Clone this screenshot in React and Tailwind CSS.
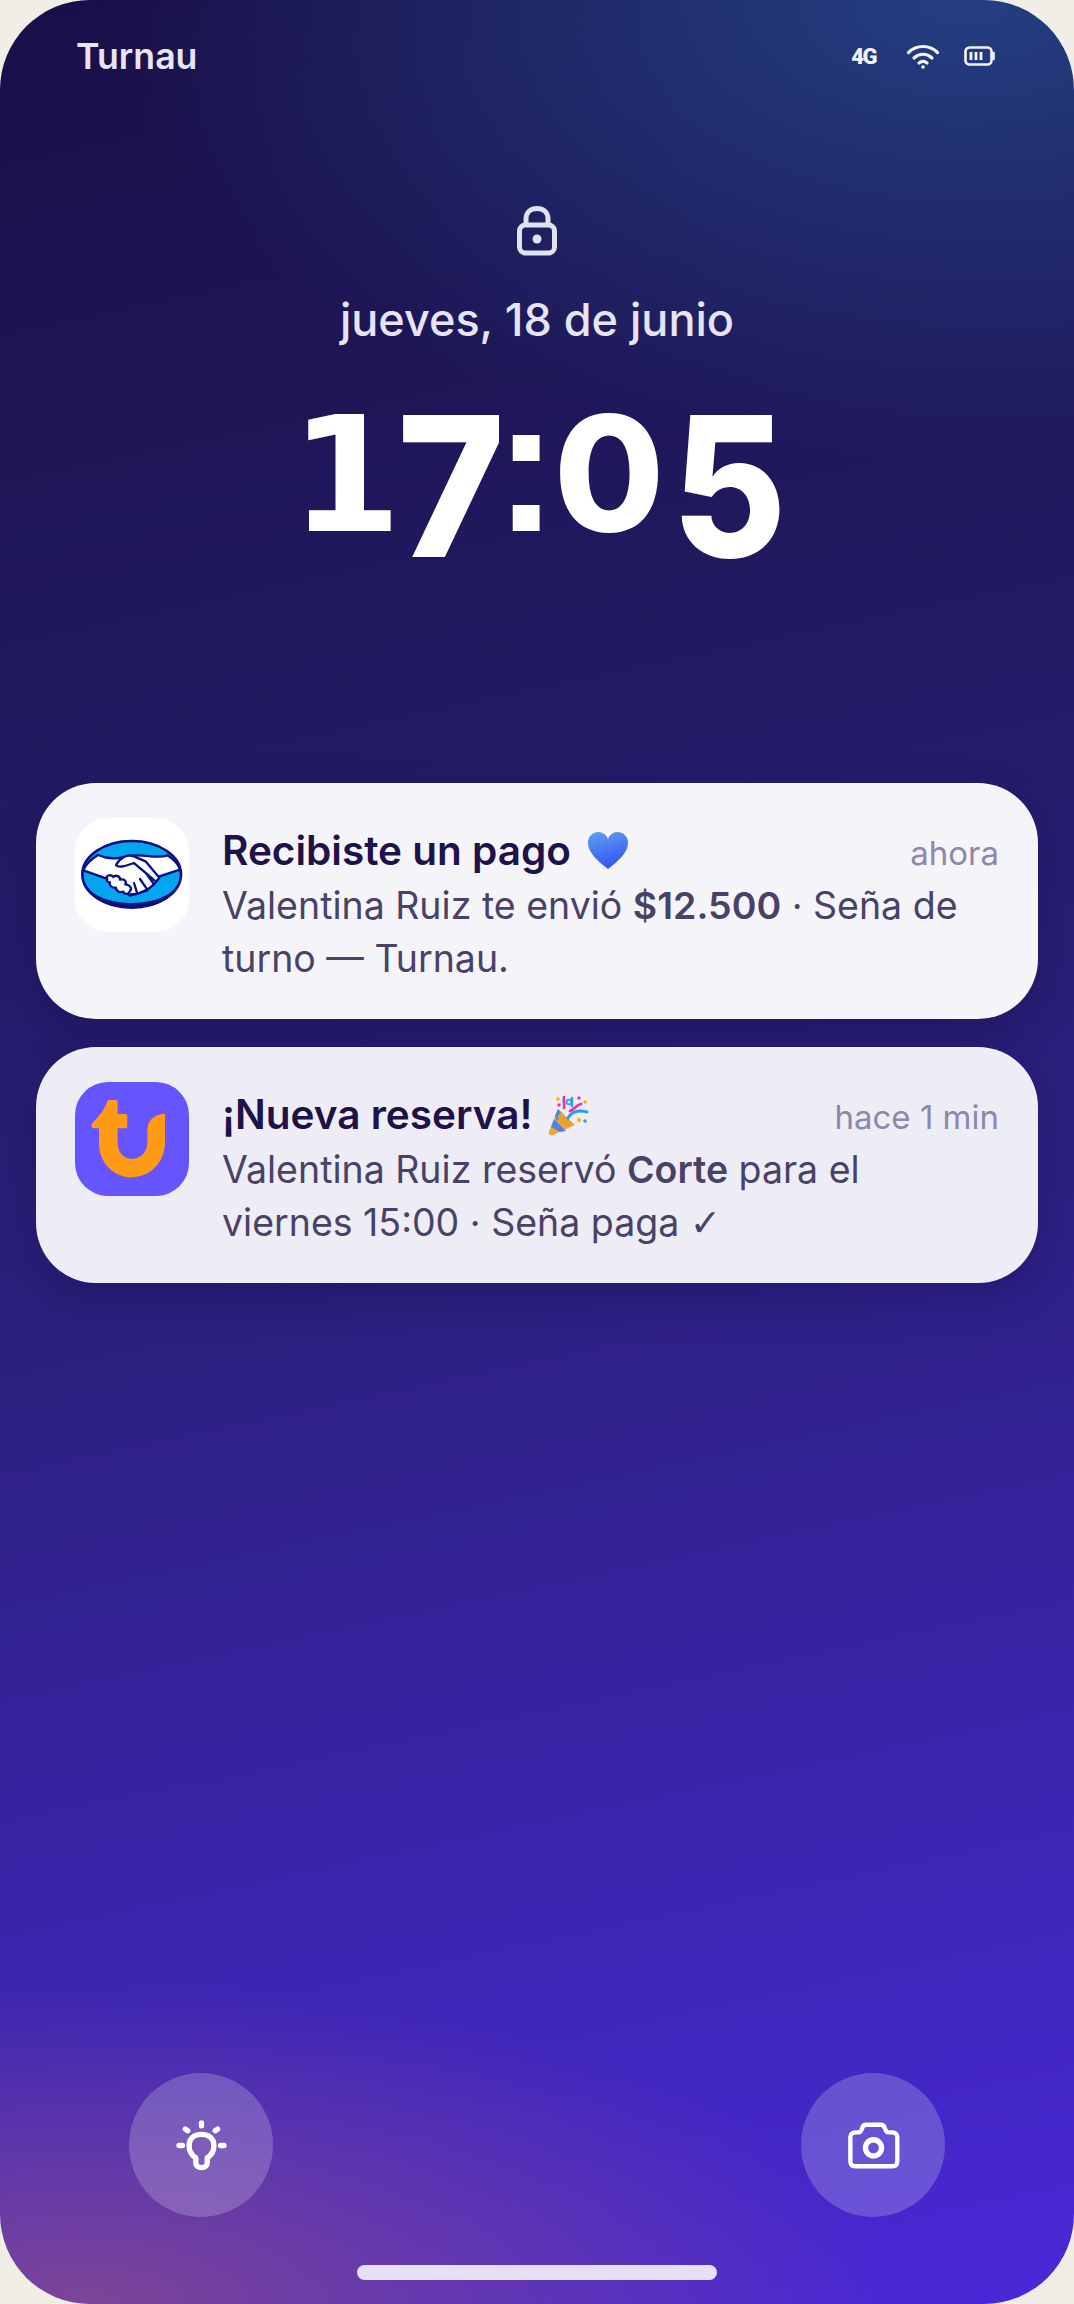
const NAVY = '#0a0f80'

function Wifi() {
  return (
    <svg width="34" height="26" viewBox="0 0 34 26" fill="none" stroke="#f2f2fa" strokeWidth="3.2" strokeLinecap="round">
      <path d="M2.5 9.5C10.5 1.5 23.5 1.5 31.5 9.5" />
      <path d="M8 15C13.5 10 20.5 10 26 15" />
      <path d="M13 20C15.5 18 18.5 18 21 20" />
      <circle cx="17" cy="24" r="1.8" fill="#f2f2fa" stroke="none" />
    </svg>
  )
}

function Battery() {
  return (
    <svg width="32" height="22" viewBox="0 0 32 22" fill="none">
      <rect x="1.5" y="2.5" width="26" height="17" rx="4" stroke="#f2f2fa" strokeWidth="2.6" />
      <path d="M29.5 8V14" stroke="#f2f2fa" strokeWidth="2.6" strokeLinecap="round" />
      <path d="M7 7V15M12 7V15M17 7V15" stroke="#f2f2fa" strokeWidth="2.8" />
    </svg>
  )
}

function Lock() {
  return (
    <svg width="42" height="50" viewBox="0 0 42 50" fill="none" stroke="#e2e1f0" strokeWidth="5">
      <rect x="3.5" y="19" width="35" height="28" rx="6" />
      <path d="M10 19V13C10 6 15 2.5 21 2.5C27 2.5 32 6 32 13V19" />
      <circle cx="21" cy="33" r="4.5" fill="#e2e1f0" stroke="none" />
    </svg>
  )
}

function MercadoIcon() {
  return (
    <svg className="w-[114px] h-[114px] rounded-[33px] bg-white shrink-0" viewBox="135 117 342 342">
      <ellipse cx="305" cy="286" rx="148" ry="100" fill="#03a5ee" stroke={NAVY} strokeWidth="8" />
      <path d="M305 388C385 388 452 345 455 292C446 340 385 372 305 372C225 372 164 340 155 292C158 345 225 388 305 388Z" fill={NAVY} />
      <path d="M160 274C168 254 184 240 204 228C235 242 262 240 298 231C340 222 380 242 412 229C430 240 444 254 450 272L388 292L350 335L300 350L228 298Z" fill="#fff" stroke={NAVY} strokeWidth="7" strokeLinejoin="round" />
      <path d="M258 258C268 238 290 224 312 232L348 248L388 296L372 316L352 332L320 345L300 346" fill="#fff" stroke={NAVY} strokeWidth="7" strokeLinejoin="round" />
      <path d="M258 258C264 268 285 262 312 252L378 308M350 285L372 316M330 300L352 332M312 312L322 344" fill="none" stroke={NAVY} strokeWidth="7" strokeLinecap="round" />
      <path d="M232 300C224 290 242 284 250 294C256 286 272 292 270 302C282 298 292 308 286 316C298 316 308 328 300 336C296 348 282 346 280 338C270 342 258 336 258 326C246 328 236 318 240 310C232 310 228 304 232 300Z" fill="#fff" stroke={NAVY} strokeWidth="7" strokeLinejoin="round" />
    </svg>
  )
}

function TurnauIcon() {
  return (
    <svg className="w-[114px] h-[114px] rounded-[33px] bg-[#6654ff] shrink-0" viewBox="135 129 342 342">
      <path d="M236 183H258Q263 183 263 188V225H286Q292 225 292 231V262Q292 268 286 268H263V310C263 340 280 360 305 360C332 360 352 340 352 310V275C352 245 370 226 405 224V310C405 370 360 415 305 415C250 415 207 370 207 315V268H192C185 268 182 258 187 252C205 235 222 215 232 187Z" fill="#ff9b12" />
    </svg>
  )
}

function Heart() {
  return (
    <svg width="42" height="38" viewBox="0 0 42 38">
      <defs>
        <linearGradient id="heartFill" x1="0.3" y1="0" x2="0.6" y2="1">
          <stop offset="0" stopColor="#5b9cf0" />
          <stop offset="1" stopColor="#3350f5" />
        </linearGradient>
      </defs>
      <path d="M21 37C12 30 1 21 1 11C1 4 6 0 11.500 0C16 0 19.500 3 21 7C22.500 3 26 0 30.500 0C36 0 41 4 41 11C41 21 30 30 21 37Z" fill="url(#heartFill)" />
    </svg>
  )
}

function Popper() {
  return (
    <svg width="42" height="42" viewBox="0 0 42 42">
      <path d="M1 38L10 15L27 31L5 41C2 42 0 40 1 38Z" fill="#f0a43a" />
      <path d="M6 25L18 37L12 38L3 33ZM10 15L15 20L9 27L7 22Z" fill="#4a86e8" />
      <path d="M13 18L25 30L20 33L9 23Z" fill="#e8a030" />
      <path d="M16 14C17 10 15 7 16 3" fill="none" stroke="#f02fa0" strokeWidth="2.6" strokeLinecap="round" />
      <path d="M20 24C24 17 31 16 39 18" fill="none" stroke="#2e9bf0" strokeWidth="3" strokeLinecap="round" />
      <path d="M22 17C27 15 28 11 33 10" fill="none" stroke="#f02fa0" strokeWidth="2.8" strokeLinecap="round" />
      <path d="M24 4V12" stroke="#2e9bf0" strokeWidth="2.4" strokeLinecap="round" />
      <circle cx="21" cy="8" r="2.4" fill="none" stroke="#2e9bf0" strokeWidth="1.6" />
      <circle cx="10" cy="5" r="1.7" fill="#f4b000" />
      <circle cx="11" cy="11" r="1.7" fill="#f02fa0" />
      <circle cx="31" cy="4" r="1.700" fill="#f02fa0" />
      <circle cx="37" cy="8" r="1.7" fill="#f4b000" />
      <circle cx="31" cy="26" r="2" fill="#f4b000" />
      <circle cx="37" cy="27" r="1.700" fill="#2e9bf0" />
    </svg>
  )
}

function Bulb() {
  return (
    <svg width="57" height="57" viewBox="188 200 170 170" fill="none" stroke="#fff" strokeWidth="16" strokeLinecap="round">
      <path d="M256 322C243 314 236 300 236 286C236 264 251 252 273 252C295 252 310 264 310 286C310 300 303 314 290 322V338C290 346 283 351 273 351C263 351 256 346 256 338Z" strokeLinejoin="round" />
      <path d="M273 218V226M225 236L232 241M321 236L314 241M206 285H216M330 285H340" strokeWidth="16" />
    </svg>
  )
}

function Camera() {
  return (
    <svg width="57" height="57" viewBox="195 200 170 170" fill="none" stroke="#fff" strokeWidth="13" strokeLinejoin="round">
      <path d="M226 246H236C242 246 244 240 246 234C248 226 252 223 258 223H302C308 223 312 226 314 234C316 240 318 246 324 246H336C346 246 351 252 351 260V332C351 342 346 347 336 347H226C216 347 211 342 211 332V260C211 252 216 246 226 246Z" />
      <circle cx="280" cy="292" r="24" strokeWidth="16" />
    </svg>
  )
}

function Notification({ icon, title, emoji, time, children }) {
  return (
    <div className="flex gap-[33px] rounded-[60px] px-[39px] pt-[35px] h-[236px] shadow-[0_16px_40px_rgba(15,10,60,0.28)] bg-[#f5f5f9] even:bg-[#eeedf6]">
      {icon}
      <div className="flex-1 min-w-0">
        <div className="flex items-center justify-between h-[60px] mt-[3px]">
          <div className="flex items-center gap-[16px] text-[40.500px] font-semibold text-[#1e1248] leading-none">
            <span>{title}</span>
            {emoji}
          </div>
          <span className="text-[33px] leading-[40px] mt-[3px] text-[#8d88aa]">{time}</span>
        </div>
        <p className="-mt-[2px] text-[37.500px] leading-[53px] text-[#4a4266]">{children}</p>
      </div>
    </div>
  )
}

export default function App() {
  return (
    <div className="bg-[#f1eee8] font-[Inter,sans-serif]">
      <div className="flex flex-col h-[2304px] rounded-[90px] overflow-hidden bg-[radial-gradient(ellipse_80%_20%_at_90%_0%,#243f82_0%,rgba(36,63,130,0)_100%),radial-gradient(ellipse_75%_14%_at_8%_100%,#7c4598_0%,rgba(124,69,152,0)_100%),linear-gradient(168deg,#190f48_0%,#211a60_30%,#2c2080_55%,#3a25ae_78%,#4a28d8_100%)]">
        <div className="flex items-center justify-between pl-[76px] pr-[78px] pt-[36px] h-[78px]">
          <span className="text-[35.700px] font-semibold text-[#e8e5f3]">Turnau</span>
          <div className="flex items-center -mt-[2px]">
            <span className="font-['Roboto',sans-serif] text-[22px] font-black text-[#f2f2fa] tracking-[-1.5px] mr-[30px]">4G</span>
            <span className="mr-[24px]"><Wifi /></span>
            <Battery />
          </div>
        </div>

        <div className="flex flex-col items-center mt-[128px]">
          <Lock />
          <p className="mt-[34px] text-[45px] leading-[60px] font-medium text-[#e6e4f2]">jueves, 18 de junio</p>
          <div className="flex h-[190px] mt-[20px] pr-[3px] items-baseline justify-center font-extrabold text-[160px] leading-[190px] text-white">
            <span className="font-['DejaVu_Sans',sans-serif] font-bold mr-[3px]">1</span>
            <span className="origin-[50%_37px] scale-x-[1.145] scale-y-[1.22]">7</span>
            <span className="font-['Liberation_Sans',sans-serif] font-bold text-[190px] -mx-[4px]">:</span>
            <span>0</span>
            <span className="origin-[50%_37px] ml-[12px] scale-x-[1.1] scale-y-[1.22]">5</span>
          </div>
        </div>

        <div className="flex flex-col gap-[28px] mx-[36px] mt-[223px]">
          <Notification icon={<MercadoIcon />} title="Recibiste un pago" emoji={<Heart />} time="ahora">
            Valentina Ruiz te envió <b className="font-semibold">$12.500</b> · Seña de turno — Turnau.
          </Notification>
          <Notification icon={<TurnauIcon />} title="¡Nueva reserva!" emoji={<Popper />} time="hace 1 min">
            Valentina Ruiz reservó <b className="font-semibold">Corte</b> para el viernes 15:00 · Seña paga <span className="font-['DejaVu_Sans',sans-serif]">✓</span>
          </Notification>
        </div>

        <div className="flex-1" />

        <div className="flex justify-between px-[129px]">
          <div className="flex items-center justify-center w-[144px] h-[144px] rounded-full bg-white/20"><Bulb /></div>
          <div className="flex items-center justify-center w-[144px] h-[144px] rounded-full bg-white/20"><Camera /></div>
        </div>

        <div className="self-center w-[360px] h-[15px] mt-[48px] mb-[24px] rounded-full bg-[#e6dff5]" />
      </div>
    </div>
  )
}
